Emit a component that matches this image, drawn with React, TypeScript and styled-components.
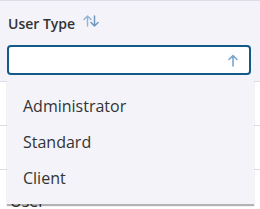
import React from "react";
import styled, { createGlobalStyle } from "styled-components";

const GlobalStyle = createGlobalStyle`
  html, body {
    margin: 0;
    padding: 0;
    background: #ffffff;
    font-family: "Open Sans", "Noto Sans", sans-serif;
    overflow: hidden;
  }
`;

const Table = styled.div`
  position: relative;
  width: 260px;
  height: 209px;
  background: #fff;
  border-top: 1px solid #dddde8;
  overflow: hidden;
`;

const HeaderCell = styled.div`
  background: #f3f3f9;
  height: 81px;
  border-bottom: 1px solid #dddde8;
  padding: 0 9px 0 7px;
  box-sizing: border-box;
`;

const Title = styled.div`
  display: flex;
  align-items: center;
  gap: 8px;
  height: 44px;
  padding: 1px 0 0 1px;
  box-sizing: border-box;
  font-size: 14px;
  font-weight: 600;
  color: #333;
`;

const SortIcon = styled.svg`
  width: 16px;
  height: 12px;
  margin-top: -5px;
`;

const FilterBox = styled.div`
  display: flex;
  align-items: center;
  justify-content: flex-end;
  height: 30px;
  border: 2px solid #135a88;
  border-radius: 4px;
  background: #fff;
  box-sizing: border-box;
  padding-right: 11px;
`;

const Row = styled.div`
  height: 44px;
  border-bottom: 1px solid #dddde8;
  padding-left: 10px;
  font-size: 16px;
  line-height: 22px;
  color: #333;
  display: flex;
  align-items: flex-end;
  box-sizing: border-box;

  &:first-of-type {
    height: 52px;
  }

  &:last-of-type {
    padding-top: 20px;
    align-items: flex-start;
  }
`;

const Menu = styled.ul`
  position: absolute;
  top: 79px;
  left: 7px;
  width: 247px;
  margin: 0;
  padding: 8px 0;
  list-style: none;
  background: #f3f3f9;
  box-shadow: 0 2px 1px rgba(0, 0, 0, 0.3);
`;

const MenuItem = styled.li`
  height: 36px;
  line-height: 36px;
  padding-left: 16px;
  font-size: 16px;
  color: #333;
`;

const options = ["Administrator", "Standard", "Client"];

export default function App() {
  return (
    <>
      <GlobalStyle />
      <Table>
        <HeaderCell>
          <Title>
            User Type
            <SortIcon viewBox="0 0 16 12" fill="none" strokeWidth="1.5" strokeLinecap="round" strokeLinejoin="round">
              <path d="M4.5 11V1M1 4.5l3.5-3.5 3.5 3.5" stroke="#95b6d6" />
              <path d="M11.5 1v10M8 7.5l3.5 3.5 3.5-3.5" stroke="#6f98c0" />
            </SortIcon>
          </Title>
          <FilterBox>
            <svg width="10" height="13" viewBox="0 0 10 13" fill="none" stroke="#7aa6cc" strokeWidth="1.6" strokeLinecap="round" strokeLinejoin="round">
              <path d="M5 12V1.5M1 5.5l4-4 4 4" />
            </svg>
          </FilterBox>
        </HeaderCell>
        <Row />
        <Row />
        <Row>User</Row>
        <Menu>
          {options.map((o) => (
            <MenuItem key={o}>{o}</MenuItem>
          ))}
        </Menu>
      </Table>
    </>
  );
}
